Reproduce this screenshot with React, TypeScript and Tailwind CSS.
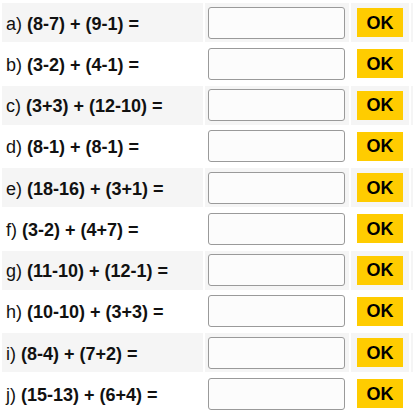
import React from 'react';

const rows = [
  ['a)', '(8-7) + (9-1) ='],
  ['b)', '(3-2) + (4-1) ='],
  ['c)', '(3+3) + (12-10) ='],
  ['d)', '(8-1) + (8-1) ='],
  ['e)', '(18-16) + (3+1) ='],
  ['f)', '(3-2) + (4+7) ='],
  ['g)', '(11-10) + (12-1) ='],
  ['h)', '(10-10) + (3+3) ='],
  ['i)', '(8-4) + (7+2) ='],
  ['j)', '(15-13) + (6+4) ='],
];

const App = () => {
  return <div className="w-[413px] h-[415px] overflow-hidden bg-white pt-[3px] pl-[2px] flex flex-col gap-[2px]" style={{ fontFamily: '"Liberation Sans", Arial, sans-serif' }}>
      {rows.map(([label, expr], i) => {
        const bg = i % 2 === 0 ? 'bg-[#f5f5f5]' : 'bg-white';
        return <div key={label} className="flex gap-[2px] h-[39.25px] shrink-0">
            {/* question */}
            <div className={`${bg} w-[201px] shrink-0 flex items-center pl-[4px] pt-[3px] text-[18px] text-[#111] whitespace-nowrap`}>
              <span>{label}</span>
              <span className="font-bold ml-[5px]">{expr}</span>
            </div>
            {/* answer */}
            <div className={`${bg} w-[144px] shrink-0 flex items-center pl-[3px]`}>
              <input type="text" className="w-[137px] h-[32px] border border-[#9a9a9a] rounded-[3px] bg-[#fcfcfc]" />
            </div>
            {/* button */}
            <div className={`${bg} w-[58px] shrink-0 flex items-center justify-center`}>
              <button className="w-[46px] h-[29px] bg-[#ffcc00] text-black font-bold text-[18px] leading-none">OK</button>
            </div>
            <div className={`${bg} w-[20px] shrink-0`}></div>
          </div>;
      })}
    </div>;
};
export default App;
